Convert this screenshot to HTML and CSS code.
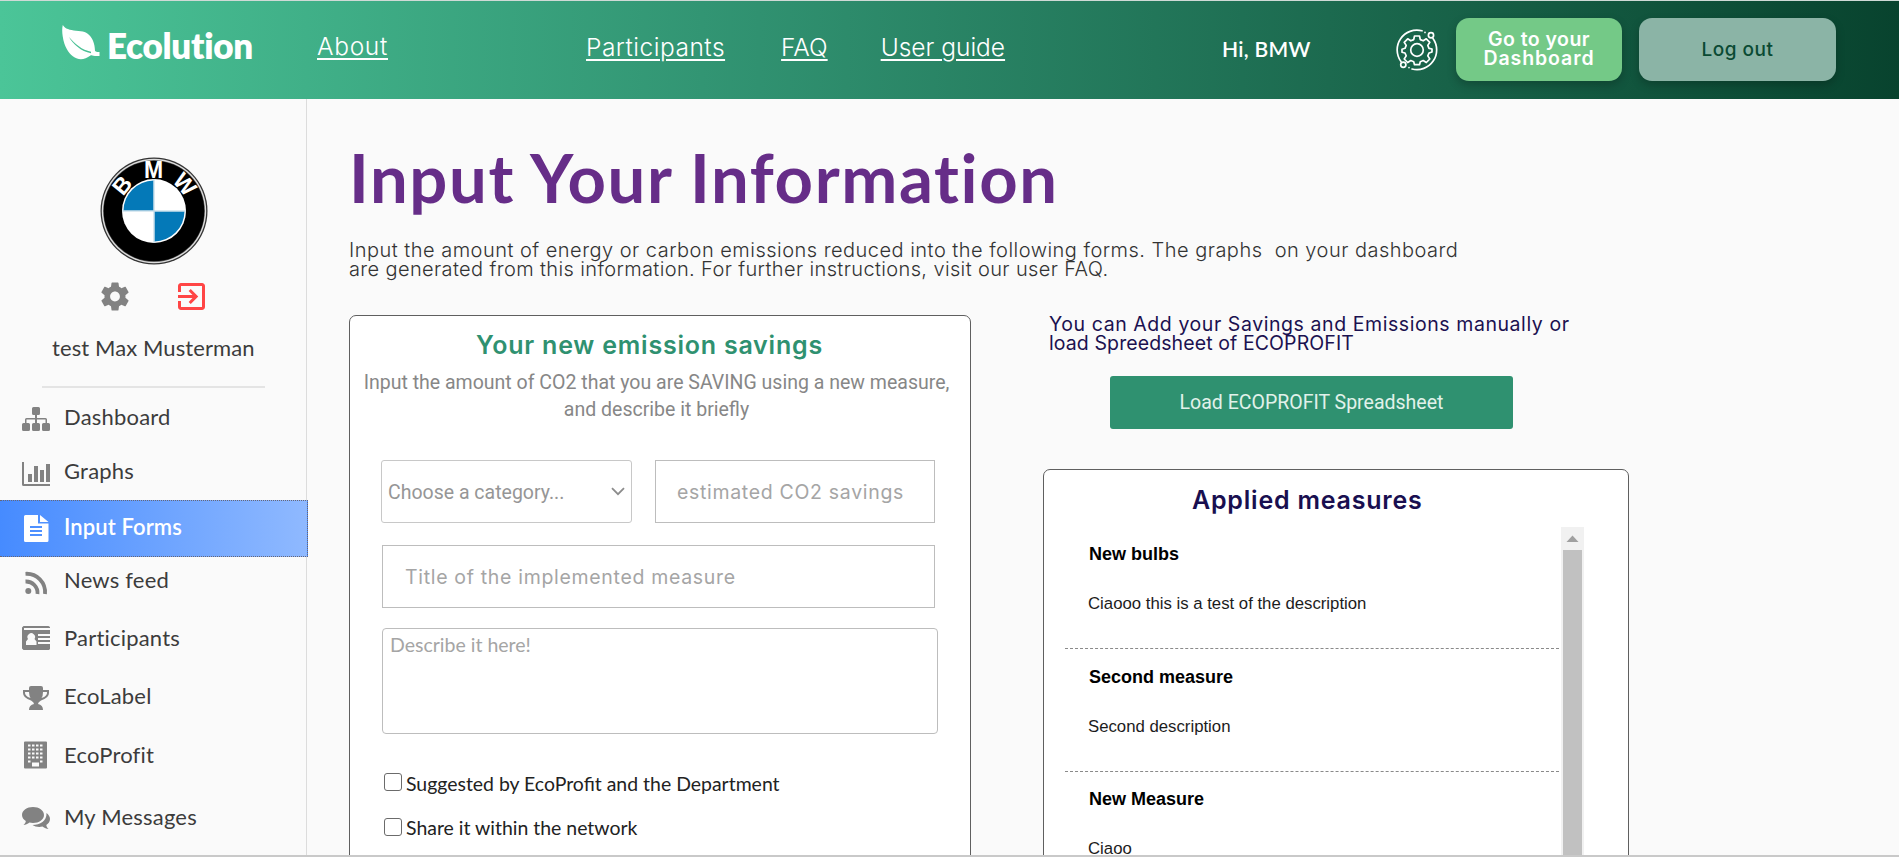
FILE: index.html
```html
<!DOCTYPE html>
<html lang="en">
<head>
<meta charset="utf-8">
<title>Ecolution</title>
<link rel="stylesheet" href="styles.css">
</head>
<body>
<header class="topbar">
  <div class="brand">
    <svg class="leaf" viewBox="0 0 38 35"><path fill="#fff" fill-rule="evenodd" d="M.8 0C3 4 8 5 14 5.700C21 6 25 7 28.500 11.500C32 16 33 22 33 26C34 27 36 27 37.500 27V31H33C30 31 29.500 30 28.500 30.500C24 34 19 35 15 33.500C9 31 5 26 2.500 19C0 11-.3 4 .8 0ZM7 12C11 19 19 26.500 29 28.300V26.700C20 25 13 19 7 12Z"/></svg>
    <span class="t logo-text">Ecolution</span>
  </div>
  <nav class="links">
    <a class="t l-about">About</a>
    <a class="t l-part">Participants</a>
    <a class="t l-faq">FAQ</a>
    <a class="t l-guide">User guide</a>
  </nav>
  <div class="hello"><span class="t">Hi, BMW</span></div>
  <svg class="cog" viewBox="0 0 42 42" fill="none" stroke="#fff" stroke-width="1.700">
    <path d="M26 1.800A19.700 19.700 0 0 0 5 32.500M16 40A19.700 19.700 0 0 0 37 9.500M13 38.500v.1M29 3.400v.1" stroke-linecap="round"/>
    <circle cx="35" cy="6.300" r="2.600"/><circle cx="7.300" cy="35.700" r="2.600"/>
    <circle cx="21" cy="21" r="6.300"/>
    <path stroke-linejoin="round" d="M18.500 7h5l.8 3.600 2.900 1.200 3.100-2 3.500 3.500-2 3.100 1.200 2.900 3 .7v3l-3 1-1.200 2.900 2 3.100-3.500 3.500-3.100-2-2.900 1.200-.8 3h-5l-.8-3-2.900-1.200-3.100 2-3.500-3.500 2-3.100-1.200-2.900-3-.8v-3l3-.9 1.200-2.900-2-3.100 3.500-3.500 3.100 2 2.900-1.200z"/>
  </svg>
  <button class="btn btn-dash"><span class="t b1">Go to your</span><br><span class="t b2">Dashboard</span></button>
  <button class="btn btn-out"><span class="t">Log out</span></button>
</header>

<div class="page">
  <aside class="sidebar">
    <svg class="roundel" viewBox="0 0 108 108">
      <circle cx="54" cy="54" r="53.500" fill="#333"/><circle cx="54" cy="54" r="52.200" fill="#ddd"/><circle cx="54" cy="54" r="50.800" fill="#555"/><circle cx="54" cy="54" r="50.300" fill="#000"/>
      <circle cx="54" cy="54" r="32" fill="#fff"/>
      <path fill="#0479b8" d="M53.500 53.500H23.500A30.500 30.500 0 0 1 53.500 23.500ZM54.500 54.500H84.500A30.500 30.500 0 0 1 54.500 84.500Z"/>
      <path stroke="#b5d3e3" d="M54 22V86M22 54H86"/>
      <g class="roundel-letters" text-anchor="middle"><text x="53.500" y="20.500">M</text><text x="54" y="21" transform="rotate(-51 54 54)">B</text><text x="54" y="21" transform="rotate(49 54 54)">W</text></g>
    </svg>
    <div class="quick">
      <svg class="q-gear" viewBox="2 2 20 20"><path fill="#828282" d="M19.430 12.980c.04-.32.070-.64.070-.98s-.03-.66-.07-.98l2.110-1.650c.19-.15.240-.42.120-.64l-2-3.460c-.12-.22-.39-.3-.61-.22l-2.490 1c-.52-.4-1.080-.73-1.690-.98l-.38-2.650C14.460 2.180 14.250 2 14 2h-4c-.25 0-.46.180-.49.420l-.38 2.650c-.61.250-1.170.590-1.690.980l-2.490-1c-.23-.09-.49 0-.61.220l-2 3.460c-.13.220-.07.490.120.640l2.110 1.650c-.04.320-.07.650-.07.980s.03.660.07.980l-2.110 1.650c-.19.150-.24.420-.12.640l2 3.460c.12.220.39.300.610.220l2.490-1c.52.400 1.080.730 1.690.980l.38 2.650c.03.240.240.420.490.420h4c.25 0 .46-.18.490-.42l.38-2.650c.61-.25 1.170-.59 1.690-.98l2.490 1c.23.090.490 0 .61-.22l2-3.460c.12-.22.070-.49-.12-.64zM12 15.500c-1.930 0-3.500-1.570-3.500-3.500s1.570-3.500 3.500-3.500 3.500 1.570 3.500 3.500-1.570 3.500-3.500 3.500z"/></svg>
      <svg class="q-exit" viewBox="3 3 18 18"><path fill="#ff4545" d="M10.090 15.590L11.500 17l5-5-5-5-1.410 1.410L12.670 11H3v2h9.670zM19 3H5c-1.110 0-2 .9-2 2v4h2V5h14v14H5v-4H3v4c0 1.100.89 2 2 2h14c1.100 0 2-.9 2-2V5c0-1.100-.9-2-2-2z"/></svg>
    </div>
    <div class="user"><span class="t">test Max Musterman</span></div>
    <hr class="rule">
    <ul class="menu">
      <li class="m1"><svg viewBox="0 0 28 28"><path fill="#828282" d="M11.500 2h5a1.500 1.500 0 0 1 1.500 1.500v5a1.500 1.500 0 0 1-1.500 1.500H15v3h8.500A1.500 1.500 0 0 1 25 14.500V18h1.500a1.500 1.500 0 0 1 1.500 1.500v5a1.500 1.500 0 0 1-1.500 1.500h-5a1.500 1.500 0 0 1-1.500-1.500v-5a1.500 1.500 0 0 1 1.500-1.500H23.500v-3.500H15V18h1.500a1.500 1.500 0 0 1 1.500 1.500v5a1.500 1.500 0 0 1-1.500 1.500h-5a1.500 1.500 0 0 1-1.500-1.500v-5a1.500 1.500 0 0 1 1.500-1.500H13v-3.500H4.500V18h2A1.500 1.500 0 0 1 8 19.500v5A1.500 1.500 0 0 1 6.500 26h-5A1.500 1.500 0 0 1 0 24.500v-5A1.500 1.500 0 0 1 1.500 18H3v-3.500A1.500 1.500 0 0 1 4.500 13H13v-3h-1.500A1.500 1.500 0 0 1 10 8.500v-5A1.500 1.500 0 0 1 11.500 2Z"/></svg><span class="t">Dashboard</span></li>
      <li class="m2"><svg viewBox="0 0 28 28"><path fill="#828282" d="M0 2h2v22h26v2H1.500A1.500 1.500 0 0 1 0 24.500ZM6 14h4v8H6ZM12 6h4v16h-4ZM18 10h4v12h-4ZM24 4h4v18h-4Z"/></svg><span class="t">Graphs</span></li>
      <li class="m3 active"><svg viewBox="0 0 28 28"><path fill="#fff" fill-rule="evenodd" d="M3.500 0H16v8.500h10.500v17A1.500 1.500 0 0 1 25 27H3.500A1.500 1.500 0 0 1 2 25.500V1.500A1.500 1.500 0 0 1 3.500 0ZM8 11v2h12v-2ZM8 15v2h12v-2ZM8 19v2h12v-2ZM18 0l8.500 7H18Z"/></svg><span class="t">Input Forms</span></li>
      <li class="m4"><svg viewBox="0 0 28 28"><g fill="none" stroke="#828282" stroke-width="3.800"><path d="M3.500 4.800A18.500 18.500 0 0 1 23 25M3.500 12.500A11.500 11.500 0 0 1 15.500 25"/></g><circle cx="6.300" cy="22" r="3" fill="#828282"/></svg><span class="t">News feed</span></li>
      <li class="m5"><svg viewBox="0 0 28 28"><path fill="#828282" fill-rule="evenodd" d="M1.500 2H26.500L28 3V4H2V6H28V10H16V12H28V14H16V16H28V18H16V20H28V25L27 26H1.500L0 24.500V3.500ZM4 21H14.500V17.500L12.500 15A3.800 3.800 0 1 0 6 15L4 17.500Z"/></svg><span class="t">Participants</span></li>
      <li class="m6"><svg viewBox="0 0 28 28"><path fill="#828282" fill-rule="evenodd" d="M9 2H19Q21 2 21 4V6H27V9Q27 14 19 16.500Q16 18 16 20Q21 21 21 26H7Q7 21 12 20Q12 18 9 16.500Q1 14 1 9V6H7V4Q7 2 9 2ZM7 8H3Q2.500 12 8.500 14Q7.200 12 7 8ZM21 8Q21 12 19.500 14Q25.500 12 25 8Z"/></svg><span class="t">EcoLabel</span></li>
      <li class="m7"><svg viewBox="0 0 28 28"><path fill="#828282" d="M3 .5H24a1 1 0 0 1 1 1V26.500a1 1 0 0 1-1 1H3a1 1 0 0 1-1-1V1.500a1 1 0 0 1 1-1Z"/><path stroke="#fafafa" stroke-width="2" stroke-dasharray="2.500 1.500" d="M6 4.500H21M6 8.500H21M6 12.500H21M6 16.500H21"/><path fill="#fafafa" d="M6 19.500h2.500v2H6ZM18 19.500h2.500v2H18ZM10 21.500h7v4h-7Z"/></svg><span class="t">EcoProfit</span></li>
      <li class="m8"><svg viewBox="0 0 28 28"><path fill="#828282" d="M11 3C17 3 22 6.500 22 11S17 19 11 19C9.500 19 8.500 18.800 7.500 18.600C5.500 20 3.500 21 1.500 21C3 19.500 3.800 18.500 3.800 17C1.500 15.500 0 13.500 0 11C0 6.500 5 3 11 3ZM24.500 9C26.500 10.500 28 12.500 28 15C28 17.500 26.500 19.500 24.300 21C24.500 22.500 25 23.500 26.500 25C24.500 25 22.500 24 20.500 22.600C17 23.500 13 22.800 10.500 21C18 21 25 17 24.500 9Z"/></svg><span class="t">My Messages</span></li>
    </ul>
  </aside>

  <main class="main">
    <h1><span class="t">Input Your Information</span></h1>
    <p class="intro"><span class="t i1">Input the amount of energy or carbon emissions reduced into the following forms. The graphs&nbsp; on your dashboard</span><br><span class="t i2">are generated from this information. For further instructions, visit our user FAQ.</span></p>
    <div class="columns">
      <section class="card savings">
        <h2><span class="t">Your new emission savings</span></h2>
        <p class="sub"><span class="t">Input the amount of CO2 that you are SAVING using a new measure,</span><br><span class="t">and describe it briefly</span></p>
        <div class="row">
          <div class="field select"><span class="t">Choose a category...</span><svg viewBox="0 0 14 9"><path fill="none" stroke="#8c8c8c" stroke-width="1.800" d="M1 1.200l6 6 6-6"/></svg></div>
          <div class="field number"><span class="t">estimated CO2 savings</span></div>
        </div>
        <div class="field title"><span class="t">Title of the implemented measure</span></div>
        <div class="field area"><span class="t">Describe it here!</span></div>
        <label class="check c1"><i class="box"></i><span class="t">Suggested by EcoProfit and the Department</span></label>
        <label class="check c2"><i class="box"></i><span class="t">Share it within the network</span></label>
      </section>
      <section class="right">
        <p class="hint"><span class="t hint-a">You can Add your Savings and Emissions manually or</span><br><span class="t hint-b">load Spreedsheet of ECOPROFIT</span></p>
        <button class="load"><span class="t">Load ECOPROFIT Spreadsheet</span></button>
        <div class="card measures">
          <h2><span class="t">Applied measures</span></h2>
          <div class="scroller">
            <div class="items">
              <article><h3><span class="t">New bulbs</span></h3><p><span class="t">Ciaooo this is a test of the description</span></p></article>
              <article><h3><span class="t">Second measure</span></h3><p><span class="t">Second description</span></p></article>
              <article><h3><span class="t">New Measure</span></h3><p><span class="t">Ciaoo</span></p></article>
            </div>
            <div class="track"><svg viewBox="0 0 23 23"><path fill="#a0a0a0" d="M5.500 15h12l-6-6.500z"/></svg><div class="thumb"></div></div>
          </div>
        </div>
      </section>
    </div>
  </main>
</div>
<div class="edge"></div>
</body>
</html>
```

FILE: styles.css
```css
* { box-sizing: border-box; }
html, body { height: 857px; overflow: hidden; }
body { margin: 0; background: #fafafa; font-family: "Lato", sans-serif; color: #3c3c3c; position: relative; }
h1, h2, h3, p, ul { margin: 0; padding: 0; }
button { border: 0; padding: 0; }
.t { white-space: nowrap; }
svg { display: block; flex: none; }

.topbar { height: 99px; border-top: 1px solid #cfdad6; display: flex; align-items: flex-start; background: linear-gradient(90deg, #4bc598, #309170 40%, #08432e); color: #fff; }
.brand { display: flex; padding-left: 62px; width: 317px; flex: none; }
.leaf { width: 38px; height: 35px; margin-top: 24px; }
.logo-text { font: 800 35px/40px "Lato", sans-serif; font-variant-ligatures: none; letter-spacing: -.3px; margin: 24px 0 0 7px; }
.links { display: flex; width: 905px; margin-top: 23px; font: 300 24.500px/44px "Inter", sans-serif; }
.links a { text-decoration: underline; text-decoration-thickness: 2px; text-underline-offset: 3px; }
.l-about { letter-spacing: .7px; }
.l-part { margin-left: 198px; letter-spacing: .5px; }
.l-faq { margin-left: 56px; }
.l-guide { margin-left: 53px; }
.l-part, .l-faq, .l-guide { margin-top: 1px; }
.hello { font: 600 21px/30px "Lato", sans-serif; letter-spacing: .3px; width: 174px; margin-top: 33px; }
.cog { width: 42px; height: 42px; margin-top: 28px; }
.btn { height: 63px; margin-top: 17px; border-radius: 13px; box-shadow: 0 4px 10px rgba(0, 0, 0, .22); }
.btn-dash { width: 166px; margin-left: 18px; padding-bottom: 2px; background: #74c987; color: #fff; font: 600 19.500px/19px "Inter", sans-serif; }
.b1 { letter-spacing: .45px; }
.b2 { letter-spacing: .9px; }
.btn-out { width: 197px; margin-left: 17px; background: #8bb4a6; color: #0a4a33; font: 500 19px/22px "Inter", sans-serif; letter-spacing: .5px; }

.page { display: flex; height: 758px; overflow: hidden; }
.sidebar { width: 307px; border-right: 1px solid #dcdcdc; flex: none; }
.roundel { width: 108px; height: 108px; margin: 57.500px 0 0 99.500px; }
.roundel-letters { font: 700 23px "Liberation Sans", sans-serif; fill: #fff; }
.quick { display: flex; margin: 17px 0 0 101px; }
.q-gear { width: 28px; height: 29px; }
.q-exit { width: 27px; height: 27px; margin: 1px 0 0 49px; }
.user { height: 30px; line-height: 30px; font-size: 22px; letter-spacing: .1px; margin: 22.500px 0 0 52px; }
.rule { border: 0; height: 2px; width: 223px; background: #e4e4e4; margin: 23px 0 0 42px; }
.menu { list-style: none; font-size: 22px; letter-spacing: .2px; }
.menu li { display: flex; align-items: center; height: 58px; padding-left: 22px; gap: 14px; }
.menu .t { margin-bottom: 1px; }
.menu svg { width: 28px; height: 28px; }
.menu .m1 svg { margin-top: 4px; }
.menu .m2 { height: 54px; }
.menu .m2 svg { margin-top: 2px; }
.menu .m2 .t { margin-bottom: 5px; }
.menu .m3 .t { margin-bottom: 5px; }
.menu .m3 { height: 57px; }
.menu .m4 { height: 52px; }
.menu .m4 .t { margin-bottom: 7px; }
.menu .m6 svg { margin-top: 3px; }
.menu .m7 { height: 60px; }
.menu .m8 { height: 65px; }
.menu .m8 .t { margin-bottom: 2px; }
.menu .active { background: linear-gradient(90deg, #468bff, #8fb9ff); border: 1px dotted #667; border-left: 0; width: 308px; color: #fff; font-weight: 600; letter-spacing: .1px; position: relative; }

.main { flex: 1; padding-left: 42px; }
h1 { font: 700 67px/90px "Lato", sans-serif; letter-spacing: 1.600px; color: #662d88; margin-top: 33px; }
.intro { font: 300 20px/19px "Inter", sans-serif; color: #333; margin-top: 19px; }
.i1 { letter-spacing: .48px; }
.i2 { letter-spacing: .37px; }
.columns { display: flex; align-items: flex-start; }
.card { background: #fff; border: 1px solid #5f5f5f; border-radius: 7px; }
.savings { width: 622px; height: 600px; margin-top: 36px; padding: 0 32px; }
.card h2 { font: 600 25px/32px "Inter", sans-serif; letter-spacing: .78px; }
.savings h2 { text-align: center; color: #2f9170; margin-top: 13px; padding-right: 21px; }
.sub { text-align: center; font: 400 19.530px/27px "Roboto", sans-serif; color: #878787; margin: 8px -20px 0; padding-right: 7px; }
.row { display: flex; gap: 23px; margin: 37px 0 0 -1px; }
.field { border: 1px solid #bdbdbd; height: 63px; display: flex; align-items: center; color: #a5a5a5; font: 400 19.500px/30px "Inter", sans-serif; letter-spacing: .68px; }
.select { width: 251px; border-radius: 3px; border-color: #c8c8c8; color: #969696; padding: 2px 6px 0; justify-content: space-between; font-family: "Roboto", sans-serif; letter-spacing: 0; }
.select svg { width: 14px; height: 9px; margin-bottom: 2px; }
.number { width: 280px; padding-left: 21px; }
.title { width: 553px; margin-top: 22px; padding-left: 22px; }
.area { width: 556px; height: 106px; margin-top: 20px; border-radius: 4px; align-items: flex-start; padding: 1px 7px; font-family: "Lato", sans-serif; letter-spacing: 0; }
.check { display: flex; align-items: flex-start; font-size: 19.450px; line-height: 24px; color: #222; gap: 4px; padding-left: 2px; }
.box { width: 18px; height: 18px; margin-top: 1px; border: 1px solid #6b6b6b; border-radius: 3px; background: #fff; }
.c1 { margin-top: 38px; }
.c2 { margin-top: 20px; }
.c2 .box { margin-top: 2px; }

.right { margin-left: 72px; width: 586px; }
.hint { font: 400 19.500px/19px "Inter", sans-serif; color: #1b1150; padding-left: 6px; margin-top: 36px; }
.hint-a { letter-spacing: .57px; }
.hint-b { letter-spacing: .1px; }
.load { display: block; width: 403px; height: 53px; margin: 23px 0 0 67px; background: #2f9170; border-radius: 3px; color: #e1f1ea; font: 400 19.530px/24px "Roboto", sans-serif; }
.measures { height: 500px; margin-top: 40px; padding-left: 21px; }
.measures h2 { color: #190f50; margin-top: 14px; padding-left: 127px; }
.scroller { display: flex; margin-top: 11px; height: 400px; overflow: hidden; }
.items { width: 494px; margin-right: 2px; font-family: "Liberation Sans", sans-serif; color: #1c1c1c; }
article { height: 123px; border-bottom: 1px dashed #8a8a8a; padding: 16px 0 0 23px; }
article:first-child { height: 122px; }
article:nth-child(2) { padding-top: 17px; }
h3 { font-size: 18px; line-height: 22px; color: #000; padding-left: 1px; }
article p { font-size: 16.750px; line-height: 22px; margin-top: 28px; }
.track { width: 23px; background: #f1f1f1; }
.track svg { width: 23px; height: 23px; }
.thumb { width: 19px; height: 380px; margin-left: 2px; background: #c1c1c1; }
.edge { position: absolute; left: 0; right: 0; bottom: 0; height: 2px; background: #c9c9c9; }
```
